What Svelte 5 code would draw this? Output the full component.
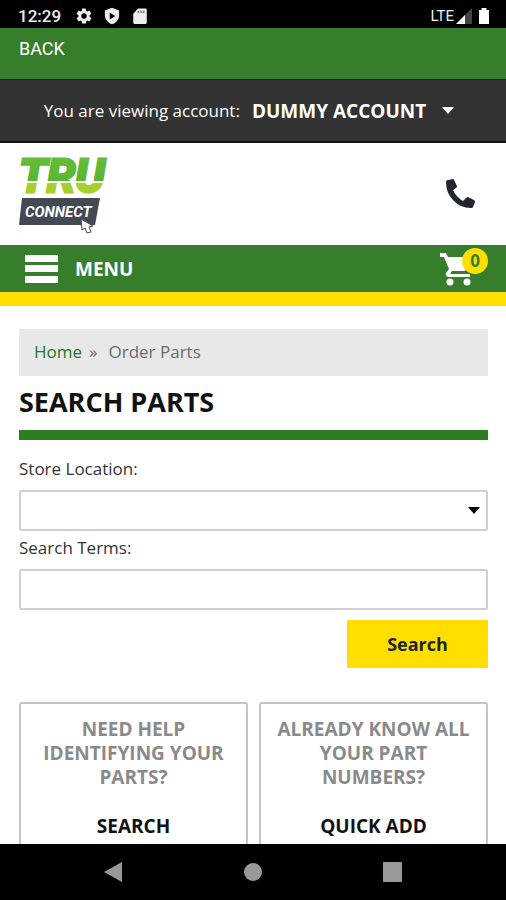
<script lang="ts">
  let location = $state('');
  let terms = $state('');

  const cartCount = 0;

  const cards = [
    { question: 'Need help identifying your parts?', action: 'Search', rest: 'John Deere' },
    { question: 'Already know all your part numbers?', action: 'Quick add', rest: 'parts to your' }
  ];
</script>

<div class="screen">
  <div class="status">
    <span class="time">12:29</span>
    <svg width="18" height="18" viewBox="0 0 24 24" fill="#eee">
      <path d="M19.4 13a7.5 7.5 0 0 0 0-2l2.1-1.6a.5.5 0 0 0 .1-.7l-2-3.4a.5.5 0 0 0-.6-.2l-2.5 1a7.3 7.3 0 0 0-1.7-1l-.4-2.7a.5.5 0 0 0-.5-.4h-4a.5.5 0 0 0-.5.4L9.1 5.1a7.7 7.7 0 0 0-1.7 1l-2.5-1a.5.5 0 0 0-.6.2l-2 3.4a.5.5 0 0 0 .1.7L4.6 11a7.9 7.9 0 0 0 0 2l-2.2 1.6a.5.5 0 0 0-.1.7l2 3.4c.1.2.4.3.6.2l2.5-1c.5.4 1.1.8 1.7 1l.4 2.7c0 .2.2.4.5.4h4c.3 0 .5-.2.5-.4l.4-2.7c.6-.2 1.2-.6 1.7-1l2.5 1c.2.1.5 0 .6-.2l2-3.4a.5.5 0 0 0-.1-.7zM12 15.6a3.6 3.6 0 1 1 0-7.2 3.6 3.6 0 0 1 0 7.2z" />
    </svg>
    <svg width="18" height="18" viewBox="0 0 24 24">
      <path d="M12 1 2.5 4.5V11c0 5.5 4 10.4 9.5 12 5.5-1.6 9.5-6.5 9.5-12V4.5z" fill="#eee" />
      <path d="m9 7.500 7.500 4.500L9 16.500z" fill="#000" />
    </svg>
    <svg width="18" height="18" viewBox="0 0 24 24">
      <path d="M20 2H9.500L3 9v12a1.500 1.500 0 0 0 1.500 1.500h15A1.500 1.500 0 0 0 21 21V3.500A1.500 1.500 0 0 0 20 2z" fill="#eee" />
      <path d="M9 5h2v3H9zm3.500 0h2v3h-2zM16 5h2v3h-2z" fill="#777" />
    </svg>
    <span class="lte">LTE</span>
    <svg width="16" height="16" viewBox="0 0 16 16">
      <path d="M16 0v16H0z" fill="#444" />
      <path d="M9 7v9H0z" fill="#fff" />
    </svg>
    <svg class="battery" width="12" height="18" viewBox="0 0 12 18" fill="#fff">
      <path d="M3.500 1h5v2H11v14H1V3h2.500z" />
    </svg>
  </div>

  <div class="topbar">
    <button class="back">BACK</button>
  </div>

  <div class="account">
    <span>You are viewing account:</span>
    <button class="account-btn">
      DUMMY ACCOUNT
      <svg width="12" height="7" viewBox="0 0 12 7"><path d="M0 0h12L6 7z" fill="#fff" /></svg>
    </button>
  </div>

  <header class="header">
    <a href="/" aria-label="TRU Connect">
      <svg class="logo" width="90" height="80" viewBox="0 0 90 80">
        <defs>
          <linearGradient id="tru" gradientUnits="userSpaceOnUse" x1="0" y1="3" x2="0" y2="40">
            <stop offset="0" stop-color="#66bd3a" />
            <stop offset="0.66" stop-color="#58b52f" />
            <stop offset="0.66" stop-color="#fff" />
            <stop offset="0.7" stop-color="#fff" />
            <stop offset="0.7" stop-color="#a5d02c" />
            <stop offset="1" stop-color="#a5d02c" />
          </linearGradient>
        </defs>
        <text class="tru" x="0" y="38" fill="url(#tru)" stroke="url(#tru)" stroke-width="3">TRU</text>
        <path d="M3 44h78l-5 27H0z" fill="#434a54" />
        <text class="connect" x="6" y="63" fill="#fff">CONNECT</text>
        <path d="m62 65 1 11 3-2 2 5 4-1-2-5 4-1z" fill="#fff" stroke="#434a54" stroke-width="1" />
      </svg>
    </a>
    <a class="phone" href="/contact" aria-label="Call us">
      <svg width="30" height="30" viewBox="0 0 30 30" fill="#22272e">
        <path d="M1 3Q1 1 3 1L8 0Q9 0 9 1L12 7Q12 8 11 9L8 11Q11 18 18 22L21 19Q22 18 23 18L29 21Q30 22 30 23L28 28Q28 29 26 29Q15 29 8 21Q1 14 1 3z" />
      </svg>
    </a>
  </header>

  <nav class="menu">
    <button class="menu-btn">
      <svg width="33" height="28" viewBox="0 0 33 28" fill="#fff">
        <path d="M0 0h33v7H0zM0 10h33v7H0zM0 21h33v7H0z" />
      </svg>
      MENU
    </button>
    <a class="cart" href="/cart" aria-label="Cart">
      <svg width="34" height="34" viewBox="0 0 34 34">
        <path d="M0 1h6l2 4h23v3l-6 11H12l-2 3h20v3H8q-3-1-2-4l3-4L4 5H0z" fill="#fff" />
        <circle cx="10" cy="30" r="3.500" fill="#fff" />
        <circle cx="27" cy="30" r="3.500" fill="#fff" />
      </svg>
      <span class="badge">{cartCount}</span>
    </a>
  </nav>

  <main class="content">
    <div class="breadcrumb">
      <a href="/">Home</a>
      <span class="sep">»</span>
      <span>Order Parts</span>
    </div>

    <h1>SEARCH PARTS</h1>

    <form>
      <label for="location">Store Location:</label>
      <div class="select">
        <select id="location" bind:value={location}>
          <option value=""></option>
        </select>
        <svg width="12" height="7" viewBox="0 0 12 7"><path d="M0 0h12L6 7z" /></svg>
      </div>
      <label for="terms">Search Terms:</label>
      <input id="terms" type="text" bind:value={terms} />
      <button type="button" class="search">Search</button>
    </form>

    <div class="cards">
      {#each cards as card}
        <a class="card" href="/parts">
          <p class="question">{card.question}</p>
          <p>{card.action}</p>
          <p class="rest">{card.rest}</p>
        </a>
      {/each}
    </div>
  </main>

  <div class="android">
    <button aria-label="Back">
      <svg width="22" height="22" viewBox="0 0 22 22"><path d="M20 1v20L2 11z" /></svg>
    </button>
    <button aria-label="Home">
      <svg width="22" height="22" viewBox="0 0 22 22"><circle cx="11" cy="11" r="9" /></svg>
    </button>
    <button aria-label="Recent apps">
      <svg width="22" height="22" viewBox="0 0 22 22"><rect x="1" y="1" width="19" height="20" rx="1" /></svg>
    </button>
  </div>
</div>

<style>
  :global(body) { margin: 0; background: #fff; }

  .screen {
    display: flex;
    flex-direction: column;
    height: 100vh;
    font-family: "Open Sans", sans-serif;
    font-size: 17px;
    color: #333;
  }

  .screen > * { flex-shrink: 0; box-sizing: border-box; }
  svg { display: block; }
  a { text-decoration: none; color: inherit; }

  button {
    background: none;
    border: none;
    padding: 0;
    margin: 0;
    font: inherit;
    color: inherit;
    cursor: pointer;
  }

  .status {
    display: flex;
    align-items: center;
    height: 28px;
    padding: 4px 16px 0 18px;
    background: #000;
    color: #eee;
    font-family: Roboto, sans-serif;
    gap: 10px;
  }
  .time { font-size: 17px; font-weight: 500; margin-right: 4px; }
  .lte { margin-left: auto; margin-right: -8px; font-size: 15px; }
  .battery { margin-left: -4px; }

  .topbar {
    height: 52px;
    padding: 10px 19px;
    background: #377e2c;
    border-bottom: 1px solid #222;
    color: #fff;
  }
  .back { display: block; font-family: Roboto, sans-serif; font-size: 18px; line-height: 22px; }

  .account {
    display: flex;
    align-items: center;
    justify-content: center;
    gap: 12px;
    height: 63px;
    padding-right: 8px;
    background: #333;
    border-bottom: 2px solid #111;
    color: #fff;
  }
  .account-btn {
    display: flex;
    align-items: center;
    gap: 16px;
    font-size: 19px;
    font-weight: 700;
  }

  .header {
    display: flex;
    align-items: center;
    justify-content: space-between;
    height: 102px;
    padding: 0 31px 0 19px;
  }
  .logo { font-family: Roboto, sans-serif; font-weight: 700; font-style: italic; }
  .tru { font-size: 46px; }
  .connect { font-size: 15px; }

  .menu {
    display: flex;
    align-items: center;
    justify-content: space-between;
    height: 61px;
    padding: 0 18px 0 25px;
    background: #377e2c;
    border-bottom: 14px solid #ffde00;
    color: #fff;
  }
  .menu-btn { display: flex; align-items: center; gap: 17px; font-size: 19px; font-weight: 700; }
  .cart { position: relative; padding-right: 14px; }
  .badge {
    position: absolute;
    top: -4px;
    right: 0;
    width: 26px;
    height: 26px;
    border-radius: 50%;
    background: #ffde00;
    color: #377e2c;
    font-size: 17px;
    font-weight: 700;
    line-height: 26px;
    text-align: center;
  }

  .screen .content {
    flex: 1 1 0;
    min-height: 0;
    overflow: hidden;
    padding: 23px 18px 0 19px;
  }

  .breadcrumb {
    display: flex;
    align-items: center;
    height: 47px;
    padding: 0 15px 2px;
    box-sizing: border-box;
    background: #e8e8e8;
    color: #6b6b72;
  }
  .breadcrumb a { color: #237a1c; }
  .sep { margin: 0 11px 0 7px; }

  h1 {
    margin: 0 0 16px;
    padding: 8px 0 10px;
    border-bottom: 10px solid #2d7e20;
    color: #111;
    font-size: 27px;
    font-weight: 700;
    line-height: 36px;
  }

  form { display: flex; flex-direction: column; }
  label { height: 26px; line-height: 26px; margin-bottom: 8px; }

  .select { display: grid; align-items: center; margin-bottom: 4px; }
  .select > * { grid-area: 1 / 1; }
  .select svg { justify-self: end; margin-right: 8px; pointer-events: none; }

  select, input {
    appearance: none;
    box-sizing: border-box;
    width: 100%;
    height: 41px;
    padding: 0 12px;
    border: 2px solid #d0d0d0;
    border-radius: 2px;
    background: #fff;
    font: inherit;
  }

  .search {
    align-self: flex-end;
    margin-top: 10px;
    width: 141px;
    height: 48px;
    background: #ffde00;
    color: #222;
    font-size: 18px;
    font-weight: 700;
  }

  .cards {
    display: grid;
    grid-template-columns: 1fr 1fr;
    gap: 11px;
    margin-top: 34px;
  }
  .card {
    padding: 13px 12px;
    border: 2px solid #c4c4c4;
    border-radius: 3px;
    color: #111;
    font-size: 19px;
    font-weight: 700;
    line-height: 24px;
    text-align: center;
    text-transform: uppercase;
  }
  .card p { margin: 0; }
  .card .question { margin-bottom: 25px; color: #8a8a8a; }
  .card .rest { margin-top: 1px; color: #8a8a8a; }

  .android {
    display: flex;
    align-items: center;
    justify-content: center;
    gap: 118px;
    height: 56px;
    background: #000;
    fill: #999;
  }
</style>
